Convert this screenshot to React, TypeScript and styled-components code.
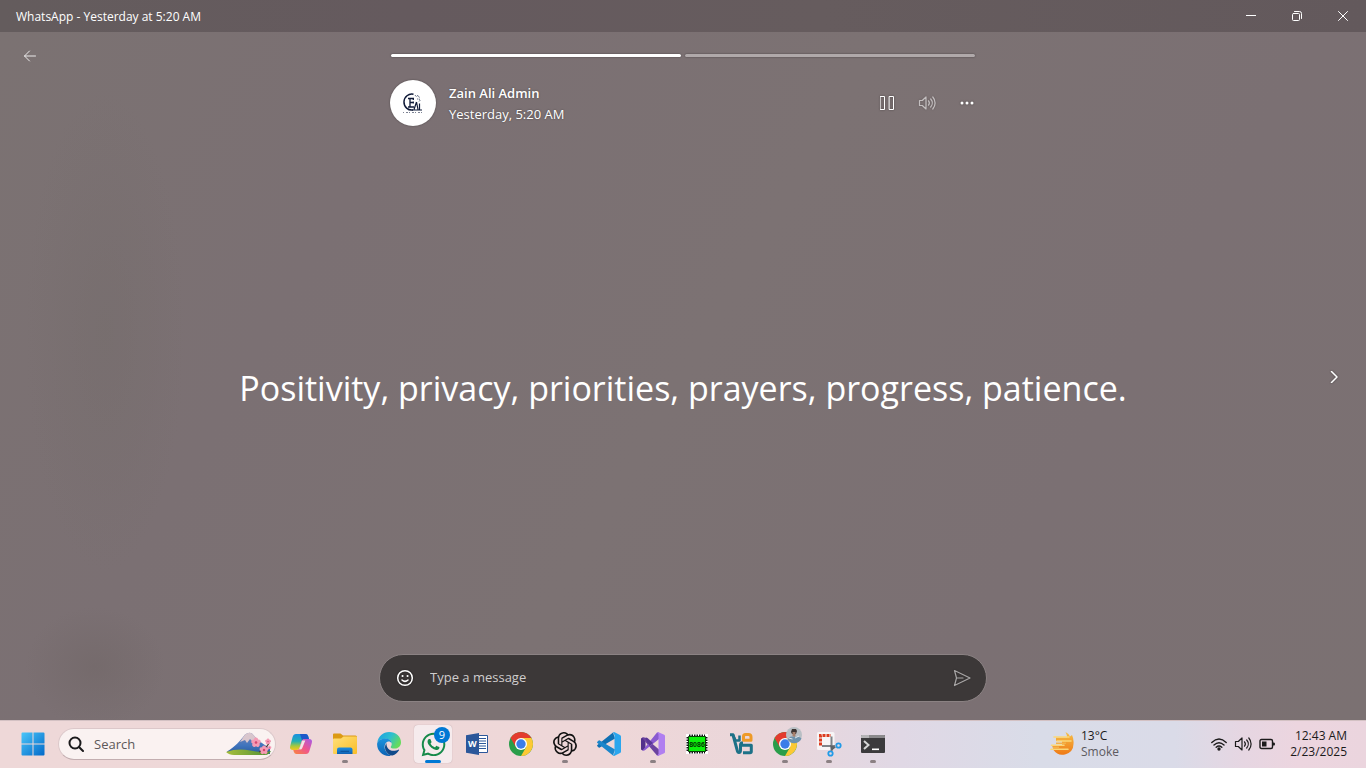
import React, { ReactNode } from "react";
import styled, { createGlobalStyle, css } from "styled-components";
import { SiOpenai } from "react-icons/si";
import { FaWhatsapp } from "react-icons/fa";

const GlobalStyle = createGlobalStyle`
  * { box-sizing: border-box; }
  body {
    margin: 0;
    font-family: "Open Sans", "Noto Sans", sans-serif;
    font-size: 12px;
    color: #fff;
  }
  button, input { font: inherit; color: inherit; border: 0; background: none; padding: 0; margin: 0; }
  svg { display: block; }
`;

const Desktop = styled.div`
  min-height: 100vh;
  display: flex;
  flex-direction: column;
`;

/* ---------- window ---------- */

const TitleBar = styled.header`
  height: 32px;
  display: flex;
  justify-content: space-between;
  align-items: stretch;
  background: linear-gradient(90deg, #645c5d, #655a5e 30%, #665c5e 60%, #63595c);
`;

const WindowTitle = styled.h1`
  margin: 0;
  padding-left: 16px;
  font-size: 12px;
  font-weight: 400;
  line-height: 34px;
`;

const WindowControls = styled.div`
  display: flex;
`;

const WindowButton = styled.button`
  width: 46px;
  display: grid;
  place-items: center;
`;

const StatusView = styled.main`
  flex: 1;
  display: grid;
  grid-template-columns: 60px 1fr 60px;
  grid-template-rows: auto 1fr auto;
  background:
    radial-gradient(ellipse 80px 240px at 105px 300px, rgba(116, 108, 107, 0.5), transparent),
    radial-gradient(ellipse 70px 60px at 95px 635px, rgba(112, 102, 102, 0.55), transparent),
    linear-gradient(120deg, #7b7272, #7b7073 25%, #7c7273 50%, #7b7073 75%, #7b7172);
`;

const IconButton = styled.button<{ $dim?: boolean }>`
  width: 40px;
  height: 40px;
  display: grid;
  place-items: center;
  opacity: ${(p) => (p.$dim ? 0.55 : 1)};
  filter: drop-shadow(0 0 1px rgba(0, 0, 0, 0.4));
`;

const BackButton = styled(IconButton)`
  grid-area: 1 / 1;
  margin: 4px 0 0 10px;
  opacity: 0.85;
  filter: none;
`;

const NextButton = styled(IconButton)`
  grid-area: 1 / 3 / 4 / 4;
  align-self: center;
  justify-self: end;
  margin: 2px 12px 0 0;
`;

const StatusHeader = styled.div`
  grid-area: 1 / 2;
  justify-self: center;
  width: 100%;
  max-width: 608px;
  padding-top: 22px;
`;

const Segments = styled.div`
  display: flex;
  gap: 4px;
  margin: 0 12px;
`;

const Segment = styled.div<{ $seen?: boolean }>`
  flex: 1;
  height: 3px;
  border-radius: 2px;
  background: ${(p) => (p.$seen ? "#fff" : "#b0a9aa")};
  box-shadow: 0 0 2px rgba(0, 0, 0, 0.45);
`;

const Author = styled.div`
  display: flex;
  align-items: center;
  padding: 23px 0 0 11px;
`;

const Avatar = styled.div`
  width: 46px;
  height: 46px;
  border-radius: 50%;
  background: #fff;
  display: grid;
  place-items: center;
  box-shadow: 0 0 2px rgba(0, 0, 0, 0.4);
`;

const AuthorText = styled.div`
  flex: 1;
  padding: 2px 0 0 13px;
  font-size: 13px;
  line-height: 21px;
  text-shadow: 0 0 2px rgba(0, 0, 0, 0.45);
`;

const AuthorName = styled.div`
  font-weight: 600;
`;

const Quote = styled.p`
  grid-area: 2 / 2;
  align-self: center;
  margin: 0;
  padding-bottom: 4px;
  text-align: center;
  font-size: 34px;
  line-height: 48px;
`;

const ReplyBar = styled.form`
  grid-area: 3 / 2;
  justify-self: center;
  width: 100%;
  max-width: 608px;
  height: 48px;
  margin-bottom: 18px;
  padding: 0 4px 0 5px;
  display: flex;
  align-items: center;
  border: 1px solid #8b8283;
  border-radius: 24px;
  background: #3c3838;
`;

const ReplyInput = styled.input`
  flex: 1;
  min-width: 0;
  padding: 0 0 2px 5px;
  font-size: 13px;
  line-height: 20px;
  outline: 0;
  &::placeholder { color: #cfcdcd; opacity: 1; }
`;

/* ---------- taskbar ---------- */

const Taskbar = styled.footer`
  height: 48px;
  display: flex;
  align-items: center;
  padding: 0 19px 0 11px;
  color: #1b1a1b;
  box-shadow: inset 0 1px #d3c1c3;
  background: linear-gradient(90deg, #eed8d8, #eed7d8 45%, #ead6da 56%, #e0d8e5 66%, #d9dce8 76%, #dadbe8 86%, #e6d6e2 91%, #ecd5df 95%, #ebd5de);
`;

const TaskButton = styled.button<{ $active?: boolean }>`
  position: relative;
  width: 38px;
  height: 38px;
  margin: 0 3px;
  padding-top: 7px;
  display: flex;
  flex-direction: column;
  align-items: center;
  gap: 4px;
  border-radius: 4px;
  ${(p) => p.$active && css`background: #f6ebed; box-shadow: 0 0 1px rgba(120, 90, 100, 0.5);`}
`;

const Running = styled.span<{ $active?: boolean }>`
  width: ${(p) => (p.$active ? 16 : 6)}px;
  height: 3px;
  border-radius: 2px;
  background: ${(p) => (p.$active ? "#0078d4" : "#8b8083")};
`;

const Badge = styled.span`
  position: absolute;
  top: 2px;
  right: 2px;
  width: 16px;
  height: 16px;
  border-radius: 50%;
  background: #0078d4;
  color: #fff;
  font-size: 11px;
  line-height: 16px;
  text-align: center;
`;

const SearchBox = styled.label`
  width: 218px;
  height: 32px;
  margin: 0 3px;
  padding: 0 3px 0 9px;
  display: flex;
  align-items: center;
  gap: 10px;
  border: 1px solid #dcc8ca;
  border-bottom-color: #c3aeb0;
  border-radius: 16px;
  background: #faf2f1;
`;

const SearchInput = styled.input`
  flex: 1;
  min-width: 0;
  font-size: 13px;
  line-height: 20px;
  outline: 0;
  &::placeholder { color: #5d5859; opacity: 1; }
`;

const Weather = styled.button`
  margin-left: auto;
  width: 157px;
  display: flex;
  align-items: center;
  gap: 7px;
  text-align: left;
  line-height: 16px;
`;

const Muted = styled.div`
  color: #5c5a60;
`;

const TrayIcon = styled.span`
  width: 24px;
  display: grid;
  place-items: center;
`;

const Clock = styled.div`
  min-width: 68px;
  text-align: right;
  line-height: 16px;
`;

/* ---------- icons ---------- */

const Line = ({ size, children, width = 1, box }: { size: number; children: ReactNode; width?: number; box?: number }) => (
  <svg width={size} height={size} viewBox={`0 0 ${box ?? size} ${box ?? size}`} fill="none" stroke="currentColor" strokeWidth={width} strokeLinecap="round" strokeLinejoin="round" aria-hidden>
    {children}
  </svg>
);

const Speaker = ({ size = 18 }: { size?: number }) => (
  <Line size={size} box={18} width={1.2}>
    <path d="M1.500 6.500h2.800L8 3v12l-3.700-3.500H1.500z" />
    <path d="M10.500 6.800a3.500 3.500 0 0 1 0 4.400M12.700 5a6 6 0 0 1 0 8M14.800 3a9 9 0 0 1 0 12" />
  </Line>
);

const AvatarLogo = () => (
  <svg width="24" height="24" viewBox="0 0 24 24" aria-hidden>
    <path d="M12.500 3.300A7.800 8 0 1 0 12 19" fill="none" stroke="#0f1a38" strokeWidth="1.500" />
    <path d="M7 7.500h6M9 7.500v8.500M9 11.500h3.500M7 16h6M12.300 7.500v1.500M12.300 10.500v2" stroke="#0f1a38" strokeWidth="1.300" fill="none" />
    <path d="M15.500 11l-2.500 7.500M15.500 11l1.500 7.500M18.500 12.500v6M11 19h10" stroke="#0f1a38" strokeWidth="1.200" fill="none" />
    <path d="M14 4l1.500 2L17 4l1.500 3-2 1 3 1-2 2" stroke="#44506b" strokeWidth="1" strokeDasharray="1 1" fill="none" />
    <path d="M2 21.500h21" stroke="#7e8494" strokeWidth="1" strokeDasharray="1 2 2 1" />
  </svg>
);

const StartIcon = () => (
  <svg width="24" height="24" viewBox="0 0 24 24" aria-hidden>
    <defs>
      <linearGradient id="win" x1="0" y1="0" x2="24" y2="24" gradientUnits="userSpaceOnUse">
        <stop stopColor="#4cc8fa" />
        <stop offset="1" stopColor="#0067c8" />
      </linearGradient>
    </defs>
    <path d="M1.500 .5H11.500V11.500H.5V1.500q0-1 1-1zM12.500 .5H22.500q1 0 1 1V11.500H12.500zM.5 12.500H11.500V23.500H1.500q-1 0-1-1zM12.500 12.500H23.500V22.500q0 1-1 1H12.500z" fill="url(#win)" />
  </svg>
);

const Blossom = ({ x, y, r }: { x: number; y: number; r: number }) => (
  <g fill="#f59ab4">
    {[0, 72, 144, 216, 288].map((a) => (
      <circle key={a} cx={x} cy={y - r} r={r * 0.75} transform={`rotate(${a} ${x} ${y})`} />
    ))}
    <circle cx={x} cy={y} r={r * 0.45} fill="#d9456e" />
  </g>
);

const Fuji = () => (
  <svg width="46" height="24" viewBox="0 0 46 24" aria-hidden>
    <defs>
      <linearGradient id="fuji" x1="0" y1="0" x2="0" y2="1">
        <stop stopColor="#7d86b8" />
        <stop offset=".6" stopColor="#3f74bd" />
        <stop offset="1" stopColor="#2b5b9c" />
      </linearGradient>
      <linearGradient id="grass" x1="0" y1="0" x2="1" y2="0">
        <stop stopColor="#a7be3c" />
        <stop offset="1" stopColor="#4d8f34" />
      </linearGradient>
    </defs>
    <path d="M1 19.500C9 15 14 9 19 2.500Q23-.5 26 1.500C30 6 36 12 44 16V22H4z" fill="url(#fuji)" />
    <path d="M19 2.500Q23-.5 26 1.500L33 9l-4-1-2 2-3-3-3 4-2-3-5 2z" fill="#d9c6cd" />
    <path d="M0 20Q12 16 24 18.500T45 19Q43 23 39 23H8Q3 23 0 20z" fill="url(#grass)" />
    <path d="M33 20Q40 18 44 9" stroke="#5a3b33" strokeWidth="1.300" fill="none" />
    <Blossom x={30} y={10.5} r={2.8} />
    <Blossom x={38} y={18} r={2.6} />
    <Blossom x={42} y={9.5} r={1.7} />
    <Blossom x={43.5} y={15.5} r={1.1} />
  </svg>
);

const CopilotIcon = () => (
  <svg width="24" height="24" viewBox="0 0 24 24" aria-hidden>
    <defs>
      <linearGradient id="cpA" x1="0" y1="0" x2="0" y2="1">
        <stop stopColor="#1a8fe0" />
        <stop offset=".45" stopColor="#22b0b5" />
        <stop offset=".75" stopColor="#a6c83e" />
        <stop offset="1" stopColor="#f7c61c" />
      </linearGradient>
      <linearGradient id="cpB" x1="1" y1="0" x2="0" y2="1">
        <stop stopColor="#a45be8" />
        <stop offset=".5" stopColor="#f0558d" />
        <stop offset="1" stopColor="#f9873c" />
      </linearGradient>
    </defs>
    <path d="M7 2H16.500Q18.500 2 19.200 4.200L20 7H15.500Q13.300 7 12.600 9.300L10.500 16Q9.900 18 7.800 18H4Q.2 18 1.200 14L3.600 5Q4.400 2 7 2z" fill="url(#cpA)" />
    <path d="M11 2H16.500Q18.500 2 19.200 4.200L20 7H15.500Q13.800 7 13 8.500z" fill="#1c58c9" />
    <path d="M17 22H7.500Q5.500 22 4.800 19.800L4.300 18H8Q10 18 10.700 15.700L13 8.600Q13.500 7 15.500 7H20Q23.800 7 22.800 11L20.400 19Q19.600 22 17 22z" fill="url(#cpB)" />
    <path d="M13.300 8.500h3L13.300 16Q12.800 17.500 11 17.500L10 17.200Q10.500 16.500 10.700 15.700z" fill="#f3e3e6" />
  </svg>
);

const ExplorerIcon = () => (
  <svg width="24" height="24" viewBox="0 0 24 24" aria-hidden>
    <defs>
      <linearGradient id="fold" x1="0" y1="0" x2="1" y2="1">
        <stop stopColor="#ffe07a" />
        <stop offset="1" stopColor="#f9bd27" />
      </linearGradient>
      <linearGradient id="dock" x1="0" y1="0" x2="0" y2="1">
        <stop stopColor="#1c8ee0" />
        <stop offset="1" stopColor="#0f62b4" />
      </linearGradient>
    </defs>
    <path d="M0 2.500Q0 1.500 1 1.500H7.500L10 3.500H22.500Q24 3.500 24 5V10H0z" fill="#dc9a14" />
    <path d="M0 7.500Q0 6.500 1 6.500H8L10.500 4.500H23Q24 4.500 24 5.500V21Q24 22 23 22H1Q0 22 0 21z" fill="url(#fold)" />
    <path d="M4 22V17.500Q4 15.500 6 15.500H17.500Q19.500 15.500 19.500 17.500V22z" fill="url(#dock)" />
    <path d="M7.500 19.300h8.500" stroke="#0b4f97" strokeWidth="1" />
  </svg>
);

const EdgeIcon = () => (
  <svg width="24" height="24" viewBox="0 0 24 24" aria-hidden>
    <defs>
      <linearGradient id="edA" x1="0" y1="0" x2="1" y2=".5">
        <stop stopColor="#1b9de2" />
        <stop offset=".55" stopColor="#2dbfd0" />
        <stop offset="1" stopColor="#65db5c" />
      </linearGradient>
      <linearGradient id="edB" x1="0" y1="0" x2="0" y2="1">
        <stop stopColor="#1c93dd" />
        <stop offset="1" stopColor="#0c62b3" />
      </linearGradient>
    </defs>
    <path d="M.3 10.500C1.300 4.300 6 0 12.200 0 19 0 24 4.800 24 10.300c0 4-3 6.300-6.200 6.300-2.800 0-4.100-.8-4.100-1.700 0-.7 1-1.200 1-3C14.700 9 12 6.800 8.700 6.800 4.600 6.800 1.500 8.300.3 10.500z" fill="url(#edA)" />
    <path d="M.1 12.500C0 9 4 6.600 8.500 6.600c3.200 0 5.900 2 6.100 4.600-1-1.500-2.300-2-3.600-1.600-3 1-4.500 5-2.500 9 1 2.200 3 4 5.500 5.100C6.500 25 .2 19.500.1 12.500z" fill="url(#edB)" />
    <path d="M9.600 11C7.500 13.500 7.400 17 9.500 20c2 2.800 4.600 3.900 6 3.500 2.800-.8 5-2.800 6.500-5.300.2-.5-.1-.8-.6-.5-1.500.8-3 1.100-4.900 1.100-4.500 0-7.600-3.800-6.900-7.800z" fill="#104a8a" />
  </svg>
);

const WordIcon = () => (
  <svg width="24" height="24" viewBox="0 0 24 24" aria-hidden>
    <path d="M12 3.500H22.500V20.500H12z" fill="#fff" stroke="#2b579a" />
    <path d="M14 6.500h7M14 9h7M14 11.500h7M14 14h7M14 16.500h7" stroke="#2b579a" />
    <path d="M1 3.200L14 1V23L1 20.800z" fill="#2b579a" />
    <text x="3" y="15" fontFamily="Open Sans, sans-serif" fontWeight="700" fontSize="9" fill="#fff">W</text>
  </svg>
);

const ChromeIcon = ({ photo }: { photo?: boolean }) => (
  <svg width="24" height="24" viewBox="0 0 24 24" overflow="visible" aria-hidden>
    <circle cx="12" cy="12" r="12" fill="#2a9d4a" />
    <path d="M12 6H22.390A12 12 0 0 1 12 24L17.200 15z" fill="#fcc934" />
    <path d="M6.800 15L1.610 6A12 12 0 0 1 22.390 6H12z" fill="#e33b2e" />
    <circle cx="12" cy="12" r="6" fill="#fff" />
    <circle cx="12" cy="12" r="4.700" fill="#3b7de8" />
    {photo && (
      <g>
        <circle cx="21" cy="3" r="8" fill="#b9bfc4" />
        <path d="M14.500 7.500Q16 4 20 4.500l6 .5q2 .5 2.500 1.500A8 8 0 0 1 14.500 7.500z" fill="#6d93ad" />
        <path d="M19-3h4l1 2-1 3h-4l-1-2z" fill="#3d3532" />
        <path d="M19.500 0h3v3.500l-1 1.500-2-1z" fill="#a6806c" />
        <path d="M15.500 6l4 1M22 6l4-2" stroke="#e0e6ea" />
      </g>
    )}
  </svg>
);

const CodeIcon = () => (
  <svg width="24" height="24" viewBox="0 0 24 24" aria-hidden>
    <path d="M.4 14.200Q-.3 13.600.4 12.900L16 .4 18 6.500 2.800 15.500Q2 16 1.300 15.200z" fill="#0f70b3" />
    <path d="M.4 9.800Q-.3 10.400.4 11.100L16 23.600 18 17.500 2.800 8.500Q2 8 1.300 8.800z" fill="#1b86cb" />
    <path d="M16 .4Q16.800-.1 17.600.3L23 2.900Q24 3.400 24 4.500V19.500Q24 20.600 23 21.100L17.600 23.700Q16.800 24.100 16 23.600L17.500 21V3z" fill="#2aa6ee" />
  </svg>
);

const StudioIcon = () => (
  <svg width="24" height="24" viewBox="0 0 24 24" aria-hidden>
    <path d="M1.500 5.500L0 6.500V17.500L1.500 18.500 4.500 17V7z" fill="#52308c" />
    <path d="M1.500 5.500Q3 5 4.500 6L18 17.500V23.500L16 23.400 2 7z" fill="#6b429f" />
    <path d="M1.500 18.500L16 .6H18V7L4.500 17.800Q3 19 1.500 18.500z" fill="#8a5ad0" />
    <path d="M4 6Q5 5 6.500 6L12 11 8.500 14z" fill="#5a3796" />
    <path d="M16 .6Q16.700 0 17.500.2L23.200 2.800Q24 3.300 24 4V20Q24 20.700 23.200 21.200L17.500 23.800Q16.500 24 16 23.400L17.500 22V2z" fill="#b07ff0" />
  </svg>
);

const ChipIcon = () => (
  <svg width="24" height="24" viewBox="0 0 24 24" aria-hidden>
    <path d="M1 2H23V22H1z" fill="#fff" />
    <path d="M4 3.500H20M4 20.500H20" stroke="#111" strokeWidth="2" strokeDasharray="1.500 1" />
    <path d="M2.500 5V19M21.500 5V19" stroke="#111" strokeWidth="2" strokeDasharray="1.500 1" />
    <path d="M3.500 4.500H20.500V19.500H3.500z" fill="#0cf00c" stroke="#0a3d0a" />
    <text x="12" y="14.500" textAnchor="middle" fontFamily="Liberation Sans, sans-serif" fontWeight="700" fontSize="7" fill="#033003">8086</text>
  </svg>
);

const BoxIcon = () => (
  <svg width="24" height="24" viewBox="0 0 24 24" fill="none" strokeWidth="3.500" strokeLinejoin="round" aria-hidden>
    <path d="M1 2.800H4L8 17.500Q8.500 20.500 10 20.500T11.500 18V13Q11.500 10.700 14 10.700" stroke="#1d7187" strokeWidth="3" />
    <path d="M4 2.800L6.500 8.500H10.500V3.500" stroke="#1d7187" strokeWidth="2.500" />
    <path d="M12 13.200H22.300V19.500Q22.300 20.700 21 20.700H14" stroke="#1d7187" strokeWidth="3" />
    <path d="M14.500 7.800V4.500Q14.500 2.500 16.500 2.500H19.500Q22 2.500 22 5V8.200H14.500z" stroke="#ee9a27" strokeWidth="3" />
  </svg>
);

const SnipIcon = () => (
  <svg width="24" height="24" viewBox="0 0 24 24" overflow="visible" aria-hidden>
    <path d="M1.500 0H16Q17.500 0 17.500 1.500V16.500Q17.500 18 16 18H1.500Q0 18 0 16.500V1.500Q0 0 1.500 0z" fill="#f7f5f6" />
    <path d="M3.500 13.500V3.500H14" fill="none" stroke="#dc3c1f" strokeWidth="3" strokeDasharray="3 1" />
    <path d="M5 14H18M14.500 4.500V19" stroke="#7f8388" strokeWidth="2" />
    <path d="M13 13l6 2-1 1-3.500 3z" fill="#5e6368" />
    <circle cx="21.500" cy="13.500" r="2.200" fill="none" stroke="#219be8" strokeWidth="1.800" />
    <circle cx="13.500" cy="21.500" r="2.200" fill="none" stroke="#219be8" strokeWidth="1.800" />
  </svg>
);

const TerminalIcon = () => (
  <svg width="24" height="24" viewBox="0 0 24 24" aria-hidden>
    <path d="M1 3H23Q24 3 24 4V20Q24 21 23 21H1Q0 21 0 20V4Q0 3 1 3z" fill="#3b3a3c" />
    <path d="M0 6V4Q0 3 1 3H23Q24 3 24 4V6z" fill="#8b8a8c" />
    <path d="M0 6V4Q0 3 1 3H8V6z" fill="#b5b4b6" />
    <path d="M3 9L7.500 13 3 17" fill="none" stroke="#d6d6d6" strokeWidth="2" />
    <path d="M11 17.300H18" stroke="#fff" strokeWidth="1.600" />
  </svg>
);

const SmokeIcon = () => (
  <svg width="24" height="24" viewBox="0 0 24 24" aria-hidden>
    <defs>
      <linearGradient id="smoke" x1="0" y1="0" x2="0" y2="1">
        <stop stopColor="#f6bf48" />
        <stop offset="1" stopColor="#ef7a16" />
      </linearGradient>
    </defs>
    <path d="M15.500 0Q19 1.500 20 4.500L22 3Q24 7 23.500 12A11 11 0 0 1 3.500 18L2 13H12V9H6V5.500H17Q17 2.500 15.500 0z" fill="url(#smoke)" />
    <path d="M4 5H19M7 9H21M1.500 13.300H14M1 17.300H18" stroke="#fbd778" strokeWidth="1.600" strokeLinecap="round" />
    <path d="M6 11.200H16M3 15.300H9" stroke="#f3b24a" strokeWidth="1.400" />
  </svg>
);

type Task = { name: string; icon: ReactNode; running?: boolean; active?: boolean; badge?: number };

const WhatsAppIcon = styled(FaWhatsapp)`
  width: 27px;
  height: 27px;
  margin: -1px -1px -2px;
  color: #168a4a;
`;

const tasks: Task[] = [
  { name: "Copilot", icon: <CopilotIcon /> },
  { name: "File Explorer", icon: <ExplorerIcon />, running: true },
  { name: "Edge", icon: <EdgeIcon /> },
  { name: "WhatsApp", icon: <WhatsAppIcon />, running: true, active: true, badge: 9 },
  { name: "Word", icon: <WordIcon /> },
  { name: "Chrome", icon: <ChromeIcon /> },
  { name: "ChatGPT", icon: <SiOpenai size={24} color="#111" />, running: true },
  { name: "VS Code", icon: <CodeIcon /> },
  { name: "Visual Studio", icon: <StudioIcon />, running: true },
  { name: "8086 emulator", icon: <ChipIcon /> },
  { name: "VirtualBox", icon: <BoxIcon /> },
  { name: "Chrome profile", icon: <ChromeIcon photo />, running: true },
  { name: "Snipping Tool", icon: <SnipIcon />, running: true },
  { name: "Terminal", icon: <TerminalIcon />, running: true },
];

export default function App() {
  return (
    <Desktop>
      <GlobalStyle />
      <TitleBar>
        <WindowTitle>WhatsApp - Yesterday at 5:20 AM</WindowTitle>
        <WindowControls>
          <WindowButton aria-label="Minimize">
            <Line size={10}><path d="M0 4.500h10" /></Line>
          </WindowButton>
          <WindowButton aria-label="Restore">
            <Line size={10}>
              <path d="M1.500 2.500h5q1 0 1 1v5q0 1-1 1h-5q-1 0-1-1v-5q0-1 1-1zM2.500 .5h5q2 0 2 2v5" />
            </Line>
          </WindowButton>
          <WindowButton aria-label="Close">
            <Line size={10}><path d="M.5 .5l9 9M9.500 .5l-9 9" /></Line>
          </WindowButton>
        </WindowControls>
      </TitleBar>

      <StatusView>
        <BackButton aria-label="Back">
          <Line size={12}><path d="M11.500 6H.5M5.500 1L.5 6l5 5" /></Line>
        </BackButton>

        <StatusHeader>
          <Segments>
            <Segment $seen />
            <Segment />
          </Segments>
          <Author>
            <Avatar><AvatarLogo /></Avatar>
            <AuthorText>
              <AuthorName>Zain Ali Admin</AuthorName>
              <div>Yesterday, 5:20 AM</div>
            </AuthorText>
            <IconButton aria-label="Pause">
              <Line size={16}><path d="M1.500 1.500h4v13h-4zM10.500 1.500h4v13h-4z" /></Line>
            </IconButton>
            <IconButton $dim aria-label="Mute"><Speaker /></IconButton>
            <IconButton aria-label="More">
              <svg width="14" height="4" viewBox="0 0 14 4" fill="currentColor" aria-hidden>
                <circle cx="2" cy="2" r="1.500" /><circle cx="7" cy="2" r="1.500" /><circle cx="12" cy="2" r="1.500" />
              </svg>
            </IconButton>
          </Author>
        </StatusHeader>

        <Quote>Positivity, privacy, priorities, prayers, progress, patience.</Quote>

        <NextButton aria-label="Next status">
          <Line size={12} width={1.5}><path d="M3.500 .5L9 6l-5.500 5.500" /></Line>
        </NextButton>

        <ReplyBar onSubmit={(e) => e.preventDefault()}>
          <IconButton type="button" aria-label="Emoji">
            <Line size={18} width={1.5}>
              <circle cx="9" cy="9" r="7.300" />
              <path d="M6 11q3 2.800 6 0" />
              <path d="M6.500 7h.1M11.500 7h.1" strokeWidth="2" />
            </Line>
          </IconButton>
          <ReplyInput aria-label="Message" placeholder="Type a message" />
          <IconButton $dim aria-label="Send">
            <Line size={18} width={1.2}><path d="M1.500 1.500L17 9 1.500 16.500 3.500 9zM3.500 9H10" /></Line>
          </IconButton>
        </ReplyBar>
      </StatusView>

      <Taskbar>
        <TaskButton aria-label="Start"><StartIcon /></TaskButton>
        <SearchBox>
          <Line size={16} width={2}><circle cx="7" cy="7" r="5.500" /><path d="M11.200 11.200L15 15" /></Line>
          <SearchInput aria-label="Search" placeholder="Search" />
          <Fuji />
        </SearchBox>
        {tasks.map((t) => (
          <TaskButton key={t.name} aria-label={t.name} $active={t.active}>
            {t.icon}
            {t.running && <Running $active={t.active} />}
            {t.badge && <Badge>{t.badge}</Badge>}
          </TaskButton>
        ))}
        <Weather>
          <SmokeIcon />
          <div>
            13°C
            <Muted>Smoke</Muted>
          </div>
        </Weather>
        <TrayIcon>
          <Line size={16} width={1.4}>
            <path d="M.8 6.500Q8-.3 15.200 6.500M3 9Q8 4.300 13 9M5.200 11.300Q8 8.800 10.800 11.300" />
            <circle cx="8" cy="13" r="1" fill="currentColor" />
          </Line>
        </TrayIcon>
        <TrayIcon><Speaker /></TrayIcon>
        <TrayIcon>
          <svg width="16" height="12" viewBox="0 0 16 12" aria-hidden>
            <path d="M2.500 1.500h9.500q1.500 0 1.500 1.500v6q0 1.500-1.500 1.500H2.500Q1 10.500 1 9V3q0-1.500 1.500-1.500z" fill="none" stroke="currentColor" strokeWidth="1.400" />
            <path d="M3 3.500h4.500v5H3zM14 4.500h1q1 0 1 1.500t-1 1.500h-1z" fill="currentColor" />
          </svg>
        </TrayIcon>
        <Clock>
          <div>12:43 AM</div>
          <div>2/23/2025</div>
        </Clock>
      </Taskbar>
    </Desktop>
  );
}
